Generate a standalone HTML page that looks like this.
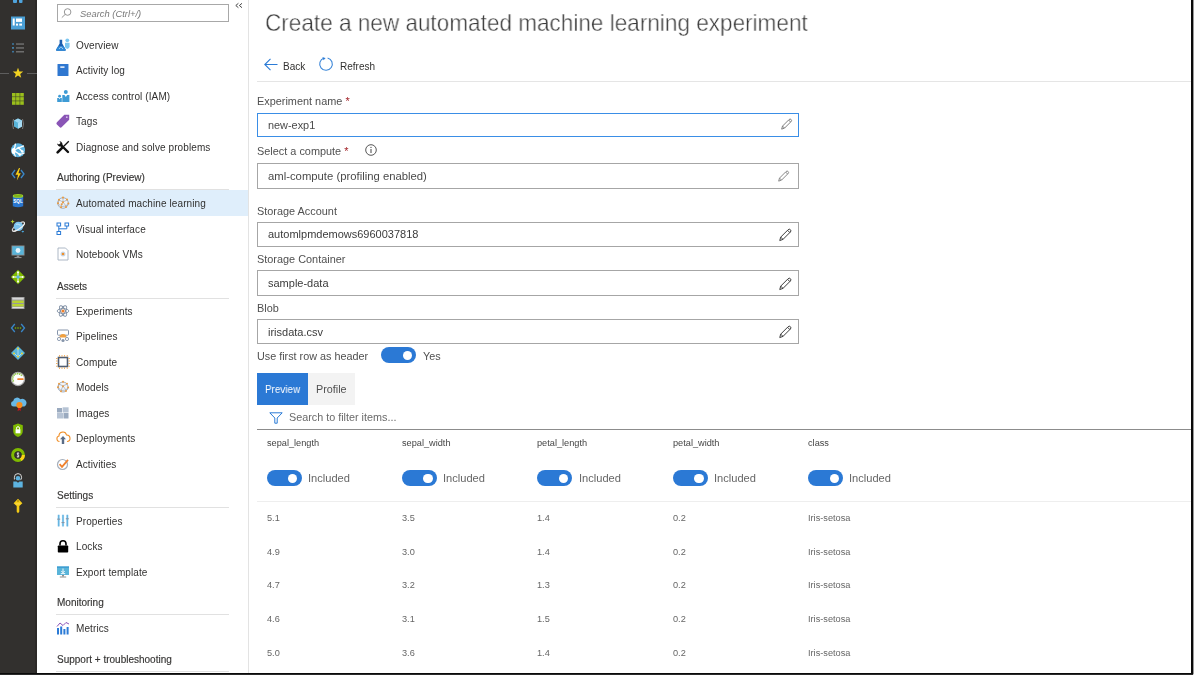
<!DOCTYPE html>
<html><head><meta charset="utf-8"><style>
html,body{margin:0;padding:0;}
body{width:1194px;height:675px;overflow:hidden;position:relative;background:#fff;font-family:"Liberation Sans", sans-serif;}
.t{position:absolute;will-change:transform;white-space:nowrap;font-family:"Liberation Sans", sans-serif;}
svg{overflow:visible}
</style></head><body>
<div style="position:absolute;left:0px;top:0px;width:37px;height:675px;background:#32302e"></div>
<div style="position:absolute;left:35px;top:0px;width:2px;height:675px;background:#2b2927"></div>
<div style="position:absolute;left:0px;top:72.5px;width:9px;height:1.2px;background:#5e5e5e"></div>
<div style="position:absolute;left:27px;top:72.5px;width:10px;height:1.2px;background:#5e5e5e"></div>
<svg style="position:absolute;left:10px;top:-13px" width="16" height="16" viewBox="0 0 16 16"><rect x="3" y="2" width="4" height="14" rx="1" fill="#4fa3dc"/><rect x="9" y="2" width="3.5" height="14" rx="1" fill="#4fa3dc"/></svg>
<svg style="position:absolute;left:10px;top:14.5px" width="16" height="16" viewBox="0 0 16 16"><rect x="1" y="1.5" width="14" height="13" fill="#4a9fd5"/><rect x="2.7" y="3.5" width="2" height="7" fill="#fff"/><rect x="6" y="3.5" width="6" height="3.4" fill="#fff"/><rect x="6" y="8.6" width="2" height="2" fill="#fff"/><rect x="9.3" y="8.6" width="2.7" height="2" fill="#fff"/></svg>
<svg style="position:absolute;left:10px;top:40px" width="16" height="16" viewBox="0 0 16 16"><rect x="2.2" y="3.2" width="1.6" height="1.6" fill="#3f86b8"/><rect x="2.2" y="7.1" width="1.6" height="1.6" fill="#4a9fd5"/><rect x="2.2" y="10.9" width="1.6" height="1.6" fill="#3f86b8"/><rect x="6" y="3.3" width="8" height="1.5" fill="#6e6e6e"/><rect x="6" y="7.2" width="8" height="1.5" fill="#6e6e6e"/><rect x="6" y="11" width="8" height="1.5" fill="#6e6e6e"/></svg>
<svg style="position:absolute;left:9.8px;top:65px" width="16" height="16" viewBox="0 0 16 16"><polygon points="8,2.8 9.4,6.6 13.2,6.6 10.2,9 11.2,12.8 8,10.5 4.8,12.8 5.8,9 2.8,6.6 6.6,6.6" fill="#f3d321"/></svg>
<svg style="position:absolute;left:10px;top:90.5px" width="16" height="16" viewBox="0 0 16 16"><rect x="2.0" y="2.0" width="3.6" height="3.6" fill="#9bbf1c"/><rect x="2.0" y="6.1" width="3.6" height="3.6" fill="#9bbf1c"/><rect x="2.0" y="10.2" width="3.6" height="3.6" fill="#9bbf1c"/><rect x="6.1" y="2.0" width="3.6" height="3.6" fill="#9bbf1c"/><rect x="6.1" y="6.1" width="3.6" height="3.6" fill="#9bbf1c"/><rect x="6.1" y="10.2" width="3.6" height="3.6" fill="#9bbf1c"/><rect x="10.2" y="2.0" width="3.6" height="3.6" fill="#9bbf1c"/><rect x="10.2" y="6.1" width="3.6" height="3.6" fill="#9bbf1c"/><rect x="10.2" y="10.2" width="3.6" height="3.6" fill="#9bbf1c"/><rect x="2" y="2" width="12" height="12" fill="none"/></svg>
<svg style="position:absolute;left:10px;top:116px" width="16" height="16" viewBox="0 0 16 16"><path d="M3.5 3 Q1.5 8 3.5 13" stroke="#777" stroke-width="1" fill="none"/><path d="M12.5 3 Q14.5 8 12.5 13" stroke="#777" stroke-width="1" fill="none"/><polygon points="8,2.5 12,4.5 12,10.5 8,12.8 4,10.5 4,4.5" fill="#59b4d9"/><polygon points="8,2.5 12,4.5 8,6.7 4,4.5" fill="#9cd6f2"/><polygon points="8,6.7 12,4.5 12,10.5 8,12.8" fill="#a8dcf5"/></svg>
<svg style="position:absolute;left:10px;top:141.5px" width="16" height="16" viewBox="0 0 16 16"><circle cx="8" cy="8.2" r="7" fill="#5db3e0"/><path d="M5.5 1.6 Q5 5 3.8 8.5 Q3.5 11 5.5 14.5 M3.8 8.5 L8.5 5.8 L14 3.8 M8.5 5.8 L12.3 9.5 M3.8 8.5 L9.8 12.6 L14.5 11" stroke="#fff" stroke-width="1.3" fill="none"/><ellipse cx="3.6" cy="9" rx="2" ry="3" fill="#fff"/><circle cx="8.5" cy="5.8" r="1.1" fill="#fff"/><circle cx="12.3" cy="9.5" r="1.3" fill="#fff"/><circle cx="9.8" cy="12.6" r="1.3" fill="#fff"/></svg>
<svg style="position:absolute;left:10px;top:166px" width="16" height="16" viewBox="0 0 16 16"><path d="M5 4 L2 8 L5 12" stroke="#3a87c9" stroke-width="1.3" fill="none"/><path d="M11 4 L14 8 L11 12" stroke="#3a87c9" stroke-width="1.3" fill="none"/><polygon points="9,2 5.5,8.8 8,8.8 6.8,14.5 10.8,7.2 8.4,7.2 10,2" fill="#fcd116"/></svg>
<svg style="position:absolute;left:10px;top:192.5px" width="16" height="16" viewBox="0 0 16 16"><path d="M2.8 2.8 V13.2 Q8 15.5 13.2 13.2 V2.8 Z" fill="#2a76cf"/><ellipse cx="8" cy="2.9" rx="5.2" ry="1.9" fill="#a8d124"/><ellipse cx="8" cy="2.9" rx="4.2" ry="1.1" fill="#7db51c"/><text x="8" y="10.3" font-size="4.6" text-anchor="middle" fill="#fff" font-family="Liberation Sans" font-weight="bold">SQL</text></svg>
<svg style="position:absolute;left:10px;top:218px" width="16" height="16" viewBox="0 0 16 16"><g transform="rotate(-35 8.4 8.6)"><ellipse cx="8.4" cy="8.6" rx="7.2" ry="2.3" fill="none" stroke="#d8d8d8" stroke-width="1.1"/></g><circle cx="8.4" cy="8.4" r="4.7" fill="#7cc4ee"/><path d="M6 6.5 Q8.5 5.5 10.5 7.5" stroke="#b5def5" stroke-width="1.2" fill="none"/><g transform="rotate(-35 8.4 8.6)"><path d="M1.2 8.6 A7.2 2.3 0 0 0 15.6 8.6" fill="none" stroke="#f2f2f2" stroke-width="1.1"/></g><polygon points="2.6,1.4 3.2,3 4.8,3.6 3.2,4.2 2.6,5.8 2,4.2 0.4,3.6 2,3" fill="#b8d432"/><ellipse cx="12.8" cy="13.6" rx="1.2" ry="0.8" fill="#4aa6dc"/></svg>
<svg style="position:absolute;left:10px;top:244px" width="16" height="16" viewBox="0 0 16 16"><rect x="1.5" y="1.5" width="13" height="10" fill="#8d8d8d"/><rect x="2.3" y="2.3" width="11.4" height="8.4" fill="#59b4d9"/><circle cx="8" cy="6.5" r="2.4" fill="#e6f3fb"/><rect x="6.7" y="11.5" width="2.6" height="1.5" fill="#8d8d8d"/><rect x="4.5" y="13" width="7" height="1.1" fill="#8d8d8d"/></svg>
<svg style="position:absolute;left:10px;top:269px" width="16" height="16" viewBox="0 0 16 16"><polygon points="8,0.8 15.2,8 8,15.2 0.8,8" fill="#7fba00"/><path d="M8 3 V13 M3 8 H13" stroke="#fff" stroke-width="1"/><circle cx="8" cy="8" r="1.7" fill="#59b4d9"/><circle cx="8" cy="3.3" r="1" fill="#fff"/><circle cx="8" cy="12.7" r="1" fill="#fff"/><circle cx="3.3" cy="8" r="1" fill="#fff"/><circle cx="12.7" cy="8" r="1" fill="#fff"/></svg>
<svg style="position:absolute;left:10px;top:295px" width="16" height="16" viewBox="0 0 16 16"><rect x="1.5" y="2" width="13" height="12" fill="#9a9a9a"/><rect x="2.3" y="2.8" width="11.4" height="1.8" fill="#d8d8d8"/><rect x="2.3" y="5.6" width="11.4" height="2.4" fill="#b8d432"/><rect x="2.3" y="9" width="11.4" height="2.4" fill="#b8d432"/><rect x="2.3" y="12" width="11.4" height="1.2" fill="#e0e0e0"/></svg>
<svg style="position:absolute;left:10px;top:320px" width="16" height="16" viewBox="0 0 16 16"><path d="M4.8 4 L1.5 8 L4.8 12" stroke="#3a87c9" stroke-width="1.3" fill="none"/><path d="M11.2 4 L14.5 8 L11.2 12" stroke="#3a87c9" stroke-width="1.3" fill="none"/><circle cx="5.5" cy="8" r="0.8" fill="#7fba00"/><circle cx="8" cy="8" r="0.8" fill="#7fba00"/><circle cx="10.5" cy="8" r="0.8" fill="#7fba00"/></svg>
<svg style="position:absolute;left:10px;top:345px" width="16" height="16" viewBox="0 0 16 16"><polygon points="8,1 15,8 8,15 1,8" fill="#59b4d9"/><path d="M8 3 V12 M4 8 L8 12 L12 8" stroke="#c5e7f7" stroke-width="0.8" fill="none"/><circle cx="8" cy="3.5" r="0.9" fill="#fcd116"/><circle cx="4" cy="8.5" r="0.9" fill="#fcd116"/><circle cx="12" cy="8.5" r="0.9" fill="#fcd116"/><circle cx="8" cy="11.5" r="0.9" fill="#fcd116"/></svg>
<svg style="position:absolute;left:10px;top:370.5px" width="16" height="16" viewBox="0 0 16 16"><circle cx="8" cy="8" r="6.6" fill="#fff" stroke="#a9a9a9" stroke-width="1.2"/><path d="M3.6 10.5 A4.6 4.6 0 0 1 11.8 4.8" stroke="#8cc63f" stroke-width="1.6" fill="none" stroke-dasharray="1.3 0.7"/><rect x="7.3" y="7.2" width="6.3" height="1.8" rx="0.5" fill="#f0812c"/></svg>
<svg style="position:absolute;left:10px;top:395.5px" width="16" height="16" viewBox="0 0 16 16"><path d="M3.6 10.6 A2.9 2.9 0 0 1 3.2 4.9 A3.9 3.9 0 0 1 10.3 3.3 A3.1 3.1 0 0 1 14.4 10.6 Z" fill="#68b8e6"/><polygon points="8.2,10.5 7.6,15.2 9.3,14 10.6,15.2 10.7,10.5" fill="#c8151b"/><circle cx="9.4" cy="9" r="3.1" fill="#f48c1e"/></svg>
<svg style="position:absolute;left:10px;top:421.5px" width="16" height="16" viewBox="0 0 16 16"><path d="M8 1.5 L12.8 3.3 V9 Q12.8 13 8 15 Q3.2 13 3.2 9 V3.3 Z" fill="#7fba00"/><rect x="5.6" y="7.3" width="4.8" height="4" fill="#fff"/><path d="M6.5 7.5 V6.2 A1.5 1.5 0 0 1 9.5 6.2 V7.5" stroke="#fff" stroke-width="1.0" fill="none"/></svg>
<svg style="position:absolute;left:10px;top:447px" width="16" height="16" viewBox="0 0 16 16"><circle cx="8" cy="8" r="5.3" fill="none" stroke="#7fba00" stroke-width="3.2"/><path d="M13.3 8 A5.3 5.3 0 0 1 10.7 12.6" stroke="#fcd116" stroke-width="3.2" fill="none"/><circle cx="8" cy="8" r="3.5" fill="#32302e"/><path d="M9.2 6.6 Q8.2 5.8 7.3 6.3 Q6.6 7 8 7.8 Q9.5 8.6 8.8 9.5 Q7.9 10.2 6.8 9.4 M8 5.2 V10.8" stroke="#fff" stroke-width="0.7" fill="none"/></svg>
<svg style="position:absolute;left:10px;top:472px" width="16" height="16" viewBox="0 0 16 16"><path d="M4.4 7.5 V5.2 A3.6 3.6 0 0 1 11.6 5.2 Q11.6 7.5 10.2 8.2" stroke="#e8e8e8" stroke-width="0.9" fill="none"/><circle cx="8" cy="6.2" r="2.3" fill="#5db3e0"/><path d="M3.3 9.5 H6.5 L8 10.8 L9.5 9.5 H12.7 V15.4 H3.3 Z" fill="#5db3e0"/></svg>
<svg style="position:absolute;left:10px;top:498px" width="16" height="16" viewBox="0 0 16 16"><path d="M8 0.8 L12.4 5.2 L9.3 8 V13.8 L8 15.2 L6.7 13.8 V8 L3.6 5.2 Z" fill="#f5cc16"/><circle cx="8" cy="3" r="0.75" fill="#7a6200"/><rect x="5.5" y="5.6" width="5" height="0.7" fill="#fbe27a"/></svg>
<div style="position:absolute;left:248px;top:0px;width:1px;height:673px;background:#e3e3e3"></div>
<div style="position:absolute;left:57px;top:4px;width:172px;height:18px;border:1px solid #a8a8a8;box-sizing:border-box;background:#fff"></div>
<div class="t" style="left:80px;top:9px;font-size:9.4px;line-height:9.4px;color:#7a7a7a;font-style:italic">Search (Ctrl+/)</div>
<svg style="position:absolute;left:60.5px;top:8px" width="11" height="10" viewBox="0 0 11 10"><circle cx="6.6" cy="4" r="3.3" fill="none" stroke="#8a8a8a" stroke-width="0.9"/><line x1="4.3" y1="6.3" x2="0.8" y2="9.6" stroke="#8a8a8a" stroke-width="0.9"/></svg>
<svg style="position:absolute;left:235px;top:3px" width="8" height="5" viewBox="0 0 8 5"><path d="M3.4 0.3 L0.8 2.5 L3.4 4.7 M7 0.3 L4.4 2.5 L7 4.7" stroke="#333" stroke-width="0.9" fill="none"/></svg>
<div class="t" style="left:76.4px;top:41px;font-size:10px;line-height:10px;color:#323130;letter-spacing:0.1px">Overview</div>
<svg style="position:absolute;left:55.5px;top:38px" width="14" height="14" viewBox="0 0 14 14"><path d="M3.6 1.8 H6.2 V5.6 L9.6 11.4 Q10.2 12.8 8.8 12.8 H1.0 Q-0.4 12.8 0.2 11.4 L3.6 5.6 Z" fill="#1b5fb0"/><path d="M2.2 8.2 H7.6 L9.6 11.4 Q10.2 12.8 8.8 12.8 H1.0 Q-0.4 12.8 0.2 11.4 Z" fill="#2e89d8"/><path d="M3 11 L5 8.8 L7 11" stroke="#cfe6f8" stroke-width="0.7" fill="none"/><circle cx="11.3" cy="2.3" r="1.9" fill="#7cc6f0"/><path d="M9 4.8 H13.6 V8.6 Q13.6 10.4 11.3 11 Q9 10.4 9 8.6 Z" fill="#7cc6f0"/></svg>
<div class="t" style="left:76.4px;top:66px;font-size:10px;line-height:10px;color:#323130;letter-spacing:0.1px">Activity log</div>
<svg style="position:absolute;left:55.5px;top:63px" width="14" height="14" viewBox="0 0 14 14"><rect x="1.5" y="1" width="11" height="12" rx="0.6" fill="#2f77d0"/><rect x="4.3" y="3.4" width="4.2" height="1.4" fill="#fff"/><rect x="12" y="1.6" width="0.8" height="11" fill="#9dc3ec"/></svg>
<div class="t" style="left:76.4px;top:92px;font-size:10px;line-height:10px;color:#323130;letter-spacing:0.1px">Access control (IAM)</div>
<svg style="position:absolute;left:55.5px;top:89px" width="14" height="14" viewBox="0 0 14 14"><circle cx="9.8" cy="3" r="2" fill="#3e9bd5"/><path d="M6.3 6 H13.4 V13 H6.3 Z" fill="#3e9bd5"/><path d="M8.5 6 L9.8 8 L11.2 6" fill="#fff"/><circle cx="3.6" cy="7.2" r="1.4" fill="#3e9bd5"/><path d="M1.2 9 H5.8 V13 H1.2 Z" fill="#3e9bd5"/><path d="M2.8 9 L3.6 10.2 L4.4 9" fill="#fff"/></svg>
<div class="t" style="left:76.4px;top:117px;font-size:10px;line-height:10px;color:#323130;letter-spacing:0.1px">Tags</div>
<svg style="position:absolute;left:55.5px;top:114px" width="14" height="14" viewBox="0 0 14 14"><path d="M8.3 0.8 H13.2 V5.7 L5.8 13.1 Q4.6 14.2 3.5 13.1 L0.9 10.5 Q-0.2 9.4 0.9 8.2 Z" fill="#8a55b6"/><circle cx="10.8" cy="3.2" r="0.9" fill="#d6c0e8"/></svg>
<div class="t" style="left:76.4px;top:143px;font-size:10px;line-height:10px;color:#323130;letter-spacing:0.1px">Diagnose and solve problems</div>
<svg style="position:absolute;left:55.5px;top:140px" width="14" height="14" viewBox="0 0 14 14"><path d="M12.8 1.2 L6 8" stroke="#111" stroke-width="1.3"/><path d="M6.6 7.4 L1.6 12.4" stroke="#111" stroke-width="2.6" stroke-linecap="round"/><path d="M12 12 L5.5 5.5" stroke="#111" stroke-width="2.4" stroke-linecap="round"/><path d="M6.2 6.2 Q2.2 7.5 1.0 3.4 L3.0 4.6 L4.6 3.0 L3.4 1.0 Q7.5 2.2 6.2 6.2 Z" fill="#111"/></svg>
<div class="t" style="left:56.5px;top:173px;font-size:10px;line-height:10px;color:#363534;-webkit-text-stroke:0.15px #363534">Authoring (Preview)</div>
<div style="position:absolute;left:56px;top:189px;width:173px;height:1px;background:#e1e1e1"></div>
<div style="position:absolute;left:37px;top:190px;width:211px;height:25.5px;background:#dfeefb"></div>
<div class="t" style="left:76.4px;top:199px;font-size:10px;line-height:10px;color:#323130;letter-spacing:0.1px">Automated machine learning</div>
<svg style="position:absolute;left:55.5px;top:196px" width="14" height="14" viewBox="0 0 14 14"><circle cx="7" cy="7" r="5.3" fill="#eef2f6" stroke="#9aa5b4" stroke-width="0.9"/><path d="M3 4 L7 6 L11 4 M7 6 L5 10.5 M7 6 L10 10 M2.2 7.5 L5 10.5 L10 10 L12 7.5 M3 4 L2.2 7.5 M7 1.6 L7 6" stroke="#9aa5b4" stroke-width="0.7" fill="none"/><circle cx="7" cy="1.6" r="1.0" fill="#ee9a3a"/><circle cx="11" cy="3.6" r="1.0" fill="#ee9a3a"/><circle cx="12.4" cy="7.5" r="1.0" fill="#ee9a3a"/><circle cx="10" cy="11" r="1.0" fill="#ee9a3a"/><circle cx="5" cy="11.2" r="1.0" fill="#ee9a3a"/><circle cx="2" cy="7.2" r="1.0" fill="#ee9a3a"/><circle cx="3" cy="3.8" r="1.0" fill="#ee9a3a"/><circle cx="7" cy="6.2" r="1.0" fill="#ee9a3a"/><circle cx="5.6" cy="8.2" r="1.0" fill="#ee9a3a"/></svg>
<div class="t" style="left:76.4px;top:225px;font-size:10px;line-height:10px;color:#323130;letter-spacing:0.1px">Visual interface</div>
<svg style="position:absolute;left:55.5px;top:222px" width="14" height="14" viewBox="0 0 14 14"><rect x="1" y="1" width="3.6" height="3" fill="none" stroke="#2b7bd6" stroke-width="1"/><rect x="9" y="1" width="3.6" height="3" fill="none" stroke="#2b7bd6" stroke-width="1"/><rect x="1" y="9.5" width="3.6" height="3" fill="none" stroke="#2b7bd6" stroke-width="1"/><path d="M2.8 4 V9.5 M2.8 6.8 H10.8 V4" stroke="#2b7bd6" stroke-width="1" fill="none"/></svg>
<div class="t" style="left:76.4px;top:250px;font-size:10px;line-height:10px;color:#323130;letter-spacing:0.1px">Notebook VMs</div>
<svg style="position:absolute;left:55.5px;top:247px" width="14" height="14" viewBox="0 0 14 14"><path d="M2 1 H9.5 L12 3.5 V13 H2 Z" fill="#fff" stroke="#a4b0c0" stroke-width="0.9"/><circle cx="7" cy="7" r="2.5" fill="#c9d9ea"/><circle cx="7" cy="7" r="1.3" fill="#f0912c"/></svg>
<div class="t" style="left:56.5px;top:282px;font-size:10px;line-height:10px;color:#363534;-webkit-text-stroke:0.15px #363534">Assets</div>
<div style="position:absolute;left:56px;top:298px;width:173px;height:1px;background:#e1e1e1"></div>
<div class="t" style="left:76.4px;top:307px;font-size:10px;line-height:10px;color:#323130;letter-spacing:0.1px">Experiments</div>
<svg style="position:absolute;left:55.5px;top:304px" width="14" height="14" viewBox="0 0 14 14"><ellipse cx="7" cy="7" rx="5.8" ry="2.4" fill="none" stroke="#7f8ea3" stroke-width="0.9"/><ellipse cx="7" cy="7" rx="5.8" ry="2.4" transform="rotate(60 7 7)" fill="none" stroke="#7f8ea3" stroke-width="0.9"/><ellipse cx="7" cy="7" rx="5.8" ry="2.4" transform="rotate(-60 7 7)" fill="none" stroke="#7f8ea3" stroke-width="0.9"/><circle cx="7" cy="7" r="1.6" fill="#f0812c"/></svg>
<div class="t" style="left:76.4px;top:332px;font-size:10px;line-height:10px;color:#323130;letter-spacing:0.1px">Pipelines</div>
<svg style="position:absolute;left:55.5px;top:329px" width="14" height="14" viewBox="0 0 14 14"><rect x="1.5" y="1" width="11" height="5.2" rx="0.8" fill="none" stroke="#8695ab" stroke-width="1"/><path d="M3.5 8.5 A3.5 3.5 0 0 1 10.5 8.5 Z" fill="#f0a040"/><circle cx="3" cy="10" r="1.6" fill="none" stroke="#8695ab" stroke-width="0.9"/><circle cx="11" cy="10" r="1.6" fill="none" stroke="#8695ab" stroke-width="0.9"/><circle cx="7" cy="11.5" r="1.6" fill="#8695ab"/></svg>
<div class="t" style="left:76.4px;top:358px;font-size:10px;line-height:10px;color:#323130;letter-spacing:0.1px">Compute</div>
<svg style="position:absolute;left:55.5px;top:355px" width="14" height="14" viewBox="0 0 14 14"><rect x="2.5" y="2.5" width="9" height="9" fill="#fff" stroke="#515e72" stroke-width="1.6"/><rect x="3.0" y="0" width="0.8" height="1.6" fill="#f0a040"/><rect x="3.0" y="12.4" width="0.8" height="1.6" fill="#f0a040"/><rect x="0" y="3.0" width="1.6" height="0.8" fill="#f0a040"/><rect x="12.4" y="3.0" width="1.6" height="0.8" fill="#f0a040"/><rect x="5.6" y="0" width="0.8" height="1.6" fill="#f0a040"/><rect x="5.6" y="12.4" width="0.8" height="1.6" fill="#f0a040"/><rect x="0" y="5.6" width="1.6" height="0.8" fill="#f0a040"/><rect x="12.4" y="5.6" width="1.6" height="0.8" fill="#f0a040"/><rect x="8.2" y="0" width="0.8" height="1.6" fill="#f0a040"/><rect x="8.2" y="12.4" width="0.8" height="1.6" fill="#f0a040"/><rect x="0" y="8.2" width="1.6" height="0.8" fill="#f0a040"/><rect x="12.4" y="8.2" width="1.6" height="0.8" fill="#f0a040"/><rect x="10.8" y="0" width="0.8" height="1.6" fill="#f0a040"/><rect x="10.8" y="12.4" width="0.8" height="1.6" fill="#f0a040"/><rect x="0" y="10.8" width="1.6" height="0.8" fill="#f0a040"/><rect x="12.4" y="10.8" width="1.6" height="0.8" fill="#f0a040"/></svg>
<div class="t" style="left:76.4px;top:383px;font-size:10px;line-height:10px;color:#323130;letter-spacing:0.1px">Models</div>
<svg style="position:absolute;left:55.5px;top:380px" width="14" height="14" viewBox="0 0 14 14"><circle cx="7" cy="7" r="5" fill="#f2f4f7" stroke="#9aa5b4" stroke-width="0.9"/><path d="M3 4 L7 6 L11 4 M7 6 L5 10.5 M7 6 L10 10 M2.2 7.5 L5 10.5 L10 10 L12 7.5 M3 4 L2.2 7.5" stroke="#9aa5b4" stroke-width="0.7" fill="none"/><circle cx="7" cy="1.8" r="0.95" fill="#ee9a3a"/><circle cx="11" cy="3.6" r="0.95" fill="#ee9a3a"/><circle cx="12.2" cy="7.5" r="0.95" fill="#ee9a3a"/><circle cx="10" cy="11" r="0.95" fill="#ee9a3a"/><circle cx="5" cy="11.2" r="0.95" fill="#ee9a3a"/><circle cx="2" cy="7.2" r="0.95" fill="#ee9a3a"/><circle cx="3" cy="3.8" r="0.95" fill="#ee9a3a"/><circle cx="7" cy="6.2" r="0.95" fill="#ee9a3a"/></svg>
<div class="t" style="left:76.4px;top:409px;font-size:10px;line-height:10px;color:#323130;letter-spacing:0.1px">Images</div>
<svg style="position:absolute;left:55.5px;top:406px" width="14" height="14" viewBox="0 0 14 14"><rect x="1" y="2" width="5" height="4.5" fill="#9aaabf"/><rect x="6.6" y="1.3" width="6" height="5.2" fill="#b6c3d4"/><rect x="1" y="7" width="6" height="5.5" fill="#b6c3d4"/><rect x="7.5" y="7" width="5" height="5.5" fill="#9aaabf"/></svg>
<div class="t" style="left:76.4px;top:434px;font-size:10px;line-height:10px;color:#323130;letter-spacing:0.1px">Deployments</div>
<svg style="position:absolute;left:55.5px;top:431px" width="14" height="14" viewBox="0 0 14 14"><path d="M3.5 10.5 A2.8 2.8 0 0 1 3 5 A3.8 3.8 0 0 1 10.5 4 A3 3 0 0 1 11 10.5" fill="none" stroke="#f0912c" stroke-width="1.1"/><path d="M7 5 L10 8.3 H8.2 V13 H5.8 V8.3 H4 Z" fill="#5a6c86"/></svg>
<div class="t" style="left:76.4px;top:460px;font-size:10px;line-height:10px;color:#323130;letter-spacing:0.1px">Activities</div>
<svg style="position:absolute;left:55.5px;top:457px" width="14" height="14" viewBox="0 0 14 14"><circle cx="6.5" cy="7.5" r="5" fill="none" stroke="#a5aebb" stroke-width="1.2"/><path d="M3.6 7.2 L6 9.8 L12 2.8" stroke="#f0812c" stroke-width="1.8" fill="none"/></svg>
<div class="t" style="left:56.5px;top:491px;font-size:10px;line-height:10px;color:#363534;-webkit-text-stroke:0.15px #363534">Settings</div>
<div style="position:absolute;left:56px;top:507px;width:173px;height:1px;background:#e1e1e1"></div>
<div class="t" style="left:76.4px;top:517px;font-size:10px;line-height:10px;color:#323130;letter-spacing:0.1px">Properties</div>
<svg style="position:absolute;left:55.5px;top:514px" width="14" height="14" viewBox="0 0 14 14"><rect x="1.6" y="0.8" width="2.2" height="11.6" fill="#9fd3ef"/><rect x="5.9" y="0.8" width="2.2" height="11.6" fill="#9fd3ef"/><rect x="10.2" y="0.8" width="2.2" height="11.6" fill="#9fd3ef"/><rect x="2.3" y="0.8" width="0.8" height="11.6" fill="#4fa8dc"/><rect x="6.6" y="0.8" width="0.8" height="11.6" fill="#4fa8dc"/><rect x="10.9" y="0.8" width="0.8" height="11.6" fill="#4fa8dc"/><rect x="1.2" y="4.6" width="3" height="1.1" fill="#8796a8"/><rect x="5.5" y="8" width="3" height="1.1" fill="#8796a8"/><rect x="9.8" y="4.2" width="3" height="1.1" fill="#8796a8"/></svg>
<div class="t" style="left:76.4px;top:542px;font-size:10px;line-height:10px;color:#323130;letter-spacing:0.1px">Locks</div>
<svg style="position:absolute;left:55.5px;top:539px" width="14" height="14" viewBox="0 0 14 14"><path d="M4 6.5 V4.8 A3 3 0 0 1 10 4.8 V6.5" stroke="#000" stroke-width="1.6" fill="none"/><rect x="1.8" y="6.5" width="10.4" height="7" rx="0.8" fill="#000"/></svg>
<div class="t" style="left:76.4px;top:568px;font-size:10px;line-height:10px;color:#323130;letter-spacing:0.1px">Export template</div>
<svg style="position:absolute;left:55.5px;top:565px" width="14" height="14" viewBox="0 0 14 14"><rect x="1" y="1.5" width="12" height="8.5" fill="#59b4d9"/><rect x="1" y="1.5" width="12" height="1.3" fill="#3a9ad0"/><path d="M7 3.5 V7.5 M5.3 6 L7 7.8 L8.7 6 M4.8 8.6 H9.2" stroke="#fff" stroke-width="0.9" fill="none"/><rect x="6" y="10" width="2" height="1.5" fill="#8d8d8d"/><rect x="3.8" y="11.5" width="6.4" height="1" fill="#8d8d8d"/></svg>
<div class="t" style="left:56.5px;top:598px;font-size:10px;line-height:10px;color:#363534;-webkit-text-stroke:0.15px #363534">Monitoring</div>
<div style="position:absolute;left:56px;top:614px;width:173px;height:1px;background:#e1e1e1"></div>
<div class="t" style="left:76.4px;top:624px;font-size:10px;line-height:10px;color:#323130;letter-spacing:0.1px">Metrics</div>
<svg style="position:absolute;left:55.5px;top:621px" width="14" height="14" viewBox="0 0 14 14"><path d="M1 5.5 L4 2 L7 4.5 L10 1.5 L13 3" stroke="#8c54b8" stroke-width="1" fill="none"/><rect x="1" y="7" width="2" height="6.5" fill="#2b7bd6"/><rect x="4.2" y="5.5" width="2" height="8" fill="#2b7bd6"/><rect x="7.4" y="8" width="2" height="5.5" fill="#2b7bd6"/><rect x="10.6" y="6" width="2" height="7.5" fill="#2b7bd6"/></svg>
<div class="t" style="left:56.5px;top:655px;font-size:10px;line-height:10px;color:#363534;-webkit-text-stroke:0.15px #363534">Support + troubleshooting</div>
<div style="position:absolute;left:56px;top:671px;width:173px;height:1px;background:#e1e1e1"></div>
<div class="t" style="left:265px;top:11px;font-size:24px;line-height:24px;color:#3a3a3a;-webkit-text-stroke:0.45px #fff;paint-order:fill;transform:scaleX(0.9395);transform-origin:0 0">Create a new automated machine learning experiment</div>
<div class="t" style="left:283.3px;top:62px;font-size:10px;line-height:10px;color:#323130;">Back</div>
<svg style="position:absolute;left:264px;top:58px" width="14" height="13" viewBox="0 0 14 13"><path d="M0.8 6.5 H13.5 M6.5 0.8 L0.8 6.5 L6.5 12.2" stroke="#2b7bd6" stroke-width="1.1" fill="none"/></svg>
<div class="t" style="left:339.7px;top:62px;font-size:10px;line-height:10px;color:#323130;">Refresh</div>
<svg style="position:absolute;left:319.3px;top:57.3px" width="14" height="14" viewBox="0 0 14 14"><path d="M8.6 0.91 A6.3 6.3 0 1 1 5 1.03" stroke="#3b86d8" stroke-width="1.1" fill="none"/><path d="M3.3 0.3 L6.6 0.9 L4.6 3.3 Z" fill="#2b7bd6"/></svg>
<div style="position:absolute;left:257px;top:81px;width:937px;height:1px;background:#e5e5e5"></div>
<div class="t" style="left:257px;top:96px;font-size:10.9px;line-height:10.9px;color:#505050;">Experiment name <span style="color:#a4262c">*</span></div>
<div style="position:absolute;left:257px;top:113px;width:542px;height:24px;border:1px solid #3a8ee6;box-sizing:border-box;background:#fff"></div>
<div class="t" style="left:267.6px;top:120px;font-size:10.9px;line-height:10.9px;color:#4a4a4a;">new-exp1</div>
<div class="t" style="left:257px;top:146px;font-size:10.9px;line-height:10.9px;color:#505050;">Select a compute <span style="color:#a4262c">*</span></div>
<svg style="position:absolute;left:365px;top:144px" width="12" height="12" viewBox="0 0 12 12"><circle cx="6" cy="6" r="5.3" stroke="#444" stroke-width="0.9" fill="none"/><rect x="5.5" y="5" width="1" height="4" fill="#444"/><circle cx="6" cy="3.4" r="0.6" fill="#444"/></svg>
<div style="position:absolute;left:257px;top:163px;width:542px;height:26px;border:1px solid #a6a6a6;box-sizing:border-box;background:#fff"></div>
<div class="t" style="left:267.6px;top:171px;font-size:11.3px;line-height:11.3px;color:#4a4a4a;">aml-compute (profiling enabled)</div>
<div class="t" style="left:257px;top:206px;font-size:10.9px;line-height:10.9px;color:#505050;">Storage Account</div>
<div style="position:absolute;left:257px;top:222px;width:542px;height:25px;border:1px solid #a6a6a6;box-sizing:border-box;background:#fff"></div>
<div class="t" style="left:267.6px;top:229px;font-size:11px;line-height:11px;color:#3b3b3b;">automlpmdemows6960037818</div>
<div class="t" style="left:257px;top:254px;font-size:10.9px;line-height:10.9px;color:#505050;">Storage Container</div>
<div style="position:absolute;left:257px;top:270px;width:542px;height:26px;border:1px solid #a6a6a6;box-sizing:border-box;background:#fff"></div>
<div class="t" style="left:267.6px;top:278px;font-size:11px;line-height:11px;color:#3b3b3b;">sample-data</div>
<div class="t" style="left:257px;top:303px;font-size:10.9px;line-height:10.9px;color:#505050;">Blob</div>
<div style="position:absolute;left:257px;top:319px;width:542px;height:25px;border:1px solid #a6a6a6;box-sizing:border-box;background:#fff"></div>
<div class="t" style="left:267.6px;top:327px;font-size:11px;line-height:11px;color:#3b3b3b;">irisdata.csv</div>
<svg style="position:absolute;left:780.6px;top:117.8px" width="11.8" height="11.8" viewBox="0 0 14 14"><path d="M0.8 13.2 L1.8 9.6 L9.6 1.8 Q10.8 0.6 12 1.8 Q13.2 3 12 4.2 L4.2 12 Z M1.8 9.6 L4.2 12 M9 2.4 L11.4 4.8" stroke="#7a7a7a" stroke-width="1.15" fill="none" stroke-linejoin="round"/></svg>
<svg style="position:absolute;left:778.4px;top:169.6px" width="11.8" height="11.8" viewBox="0 0 14 14"><path d="M0.8 13.2 L1.8 9.6 L9.6 1.8 Q10.8 0.6 12 1.8 Q13.2 3 12 4.2 L4.2 12 Z M1.8 9.6 L4.2 12 M9 2.4 L11.4 4.8" stroke="#858585" stroke-width="1.15" fill="none" stroke-linejoin="round"/></svg>
<svg style="position:absolute;left:779.1px;top:227.6px" width="13.3" height="13.3" viewBox="0 0 14 14"><path d="M0.8 13.2 L1.8 9.6 L9.6 1.8 Q10.8 0.6 12 1.8 Q13.2 3 12 4.2 L4.2 12 Z M1.8 9.6 L4.2 12 M9 2.4 L11.4 4.8" stroke="#3a3a3a" stroke-width="1.05" fill="none" stroke-linejoin="round"/></svg>
<svg style="position:absolute;left:779.1px;top:276.5px" width="13.3" height="13.3" viewBox="0 0 14 14"><path d="M0.8 13.2 L1.8 9.6 L9.6 1.8 Q10.8 0.6 12 1.8 Q13.2 3 12 4.2 L4.2 12 Z M1.8 9.6 L4.2 12 M9 2.4 L11.4 4.8" stroke="#3a3a3a" stroke-width="1.05" fill="none" stroke-linejoin="round"/></svg>
<svg style="position:absolute;left:779.1px;top:325.1px" width="13.3" height="13.3" viewBox="0 0 14 14"><path d="M0.8 13.2 L1.8 9.6 L9.6 1.8 Q10.8 0.6 12 1.8 Q13.2 3 12 4.2 L4.2 12 Z M1.8 9.6 L4.2 12 M9 2.4 L11.4 4.8" stroke="#3a3a3a" stroke-width="1.05" fill="none" stroke-linejoin="round"/></svg>
<div class="t" style="left:257px;top:351px;font-size:10.8px;line-height:10.8px;color:#505050;">Use first row as header</div>
<div style="position:absolute;left:381px;top:347px;width:35px;height:16px;background:#2b79d5;border-radius:8px"></div>
<div style="position:absolute;left:402.6px;top:350.8px;width:9.4px;height:9.4px;background:#fff;border-radius:50%"></div>
<div class="t" style="left:423px;top:351px;font-size:10.8px;line-height:10.8px;color:#505050;">Yes</div>
<div style="position:absolute;left:257px;top:373px;width:51px;height:32px;background:#2b79d5"></div>
<div class="t" style="left:264.8px;top:384px;font-size:11px;line-height:11px;color:#fff;transform:scaleX(0.9);transform-origin:0 0">Preview</div>
<div style="position:absolute;left:308px;top:373px;width:47px;height:32px;background:#f3f3f3"></div>
<div class="t" style="left:316.4px;top:384px;font-size:10.8px;line-height:10.8px;color:#505050;">Profile</div>
<div class="t" style="left:288.7px;top:412px;font-size:10.8px;line-height:10.8px;color:#6a6a6a;">Search to filter items...</div>
<svg style="position:absolute;left:269px;top:411.5px" width="14" height="12" viewBox="0 0 14 12"><path d="M0.8 0.8 H13.2 L8.2 6 V11.2 H5.8 V6 Z" stroke="#2b7bd6" stroke-width="1" fill="none" stroke-linejoin="round"/></svg>
<div style="position:absolute;left:257px;top:429px;width:937px;height:1px;background:#8c8c8c"></div>
<div class="t" style="left:266.5px;top:439px;font-size:9.2px;line-height:9.2px;color:#444;">sepal_length</div>
<div style="position:absolute;left:266.5px;top:470px;width:35px;height:16px;background:#2b79d5;border-radius:8px"></div>
<div style="position:absolute;left:288.1px;top:473.8px;width:9.4px;height:9.4px;background:#fff;border-radius:50%"></div>
<div class="t" style="left:307.8px;top:473px;font-size:11.1px;line-height:11.1px;color:#666;">Included</div>
<div class="t" style="left:401.7px;top:439px;font-size:9.2px;line-height:9.2px;color:#444;">sepal_width</div>
<div style="position:absolute;left:401.7px;top:470px;width:35px;height:16px;background:#2b79d5;border-radius:8px"></div>
<div style="position:absolute;left:423.3px;top:473.8px;width:9.4px;height:9.4px;background:#fff;border-radius:50%"></div>
<div class="t" style="left:443.0px;top:473px;font-size:11.1px;line-height:11.1px;color:#666;">Included</div>
<div class="t" style="left:537.2px;top:439px;font-size:9.2px;line-height:9.2px;color:#444;">petal_length</div>
<div style="position:absolute;left:537.2px;top:470px;width:35px;height:16px;background:#2b79d5;border-radius:8px"></div>
<div style="position:absolute;left:558.8000000000001px;top:473.8px;width:9.4px;height:9.4px;background:#fff;border-radius:50%"></div>
<div class="t" style="left:578.5px;top:473px;font-size:11.1px;line-height:11.1px;color:#666;">Included</div>
<div class="t" style="left:672.7px;top:439px;font-size:9.2px;line-height:9.2px;color:#444;">petal_width</div>
<div style="position:absolute;left:672.7px;top:470px;width:35px;height:16px;background:#2b79d5;border-radius:8px"></div>
<div style="position:absolute;left:694.3000000000001px;top:473.8px;width:9.4px;height:9.4px;background:#fff;border-radius:50%"></div>
<div class="t" style="left:714.0px;top:473px;font-size:11.1px;line-height:11.1px;color:#666;">Included</div>
<div class="t" style="left:808.0px;top:439px;font-size:9.2px;line-height:9.2px;color:#444;">class</div>
<div style="position:absolute;left:808.0px;top:470px;width:35px;height:16px;background:#2b79d5;border-radius:8px"></div>
<div style="position:absolute;left:829.6px;top:473.8px;width:9.4px;height:9.4px;background:#fff;border-radius:50%"></div>
<div class="t" style="left:849.3px;top:473px;font-size:11.1px;line-height:11.1px;color:#666;">Included</div>
<div style="position:absolute;left:257px;top:501px;width:937px;height:1px;background:#eeeeee"></div>
<div class="t" style="left:266.5px;top:514px;font-size:9.2px;line-height:9.2px;color:#666;">5.1</div>
<div class="t" style="left:401.7px;top:514px;font-size:9.2px;line-height:9.2px;color:#666;">3.5</div>
<div class="t" style="left:537.2px;top:514px;font-size:9.2px;line-height:9.2px;color:#666;">1.4</div>
<div class="t" style="left:672.7px;top:514px;font-size:9.2px;line-height:9.2px;color:#666;">0.2</div>
<div class="t" style="left:808.0px;top:514px;font-size:9.2px;line-height:9.2px;color:#666;">Iris-setosa</div>
<div class="t" style="left:266.5px;top:548px;font-size:9.2px;line-height:9.2px;color:#666;">4.9</div>
<div class="t" style="left:401.7px;top:548px;font-size:9.2px;line-height:9.2px;color:#666;">3.0</div>
<div class="t" style="left:537.2px;top:548px;font-size:9.2px;line-height:9.2px;color:#666;">1.4</div>
<div class="t" style="left:672.7px;top:548px;font-size:9.2px;line-height:9.2px;color:#666;">0.2</div>
<div class="t" style="left:808.0px;top:548px;font-size:9.2px;line-height:9.2px;color:#666;">Iris-setosa</div>
<div class="t" style="left:266.5px;top:581px;font-size:9.2px;line-height:9.2px;color:#666;">4.7</div>
<div class="t" style="left:401.7px;top:581px;font-size:9.2px;line-height:9.2px;color:#666;">3.2</div>
<div class="t" style="left:537.2px;top:581px;font-size:9.2px;line-height:9.2px;color:#666;">1.3</div>
<div class="t" style="left:672.7px;top:581px;font-size:9.2px;line-height:9.2px;color:#666;">0.2</div>
<div class="t" style="left:808.0px;top:581px;font-size:9.2px;line-height:9.2px;color:#666;">Iris-setosa</div>
<div class="t" style="left:266.5px;top:615px;font-size:9.2px;line-height:9.2px;color:#666;">4.6</div>
<div class="t" style="left:401.7px;top:615px;font-size:9.2px;line-height:9.2px;color:#666;">3.1</div>
<div class="t" style="left:537.2px;top:615px;font-size:9.2px;line-height:9.2px;color:#666;">1.5</div>
<div class="t" style="left:672.7px;top:615px;font-size:9.2px;line-height:9.2px;color:#666;">0.2</div>
<div class="t" style="left:808.0px;top:615px;font-size:9.2px;line-height:9.2px;color:#666;">Iris-setosa</div>
<div class="t" style="left:266.5px;top:649px;font-size:9.2px;line-height:9.2px;color:#666;">5.0</div>
<div class="t" style="left:401.7px;top:649px;font-size:9.2px;line-height:9.2px;color:#666;">3.6</div>
<div class="t" style="left:537.2px;top:649px;font-size:9.2px;line-height:9.2px;color:#666;">1.4</div>
<div class="t" style="left:672.7px;top:649px;font-size:9.2px;line-height:9.2px;color:#666;">0.2</div>
<div class="t" style="left:808.0px;top:649px;font-size:9.2px;line-height:9.2px;color:#666;">Iris-setosa</div>
<div style="position:absolute;left:1191px;top:0px;width:2px;height:674px;background:#0a0a0a"></div>
<div style="position:absolute;left:1193px;top:0px;width:1px;height:674px;background:#9a9a9a"></div>
<div style="position:absolute;left:0px;top:673px;width:1193px;height:1px;background:#0a0a0a"></div>
<div style="position:absolute;left:0px;top:674px;width:1193px;height:1px;background:#2a2a2a"></div>
<div style="position:absolute;left:1193px;top:674px;width:1px;height:1px;background:#ddd"></div>
</body></html>
